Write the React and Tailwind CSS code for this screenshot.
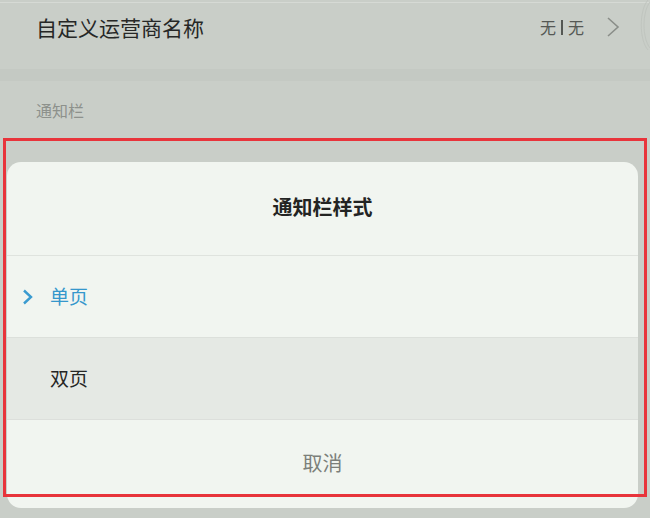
import React from "react";

const font = { fontFamily: '"Noto Sans CJK SC", "Noto Sans", sans-serif' };

export default function App() {
  return (
    <div
      className="relative w-[650px] h-[518px] overflow-hidden bg-[#c9cec8] flex flex-col"
      style={font}
    >
      <div className="h-[2px] bg-[#c9cec8]" />
      <div className="h-[1px] bg-[#d6dad5]" />
      {/* Top row */}
      <div className="h-[66px] flex items-start pt-[8px] pl-[36px] pr-[30px]">
        <div className="text-[21px] leading-[32px] text-[#262726]">自定义运营商名称</div>
        <div className="ml-auto flex items-center h-[32px]">
          <span className="text-[16px] leading-[20px] text-[#555854]">无</span>
          <span className="w-[2px] h-[15px] bg-[#555854] mx-[5px]" />
          <span className="text-[16px] leading-[20px] text-[#555854]">无</span>
          <svg className="ml-[22px]" width="14" height="22" viewBox="0 0 14 22">
            <path d="M2 2 L12 11 L2 20" fill="none" stroke="#8a8e89" strokeWidth="1.6" />
          </svg>
        </div>
      </div>
      {/* band */}
      <div className="h-[12px] bg-[#c4c9c3]" />
      {/* Section header */}
      <div className="h-[57px] pl-[36px] flex items-center">
        <span className="text-[16px] leading-[20px] text-[#8d918c]">通知栏</span>
      </div>
      {/* spacer before card */}
      <div className="h-[24px]" />
      {/* Dialog card */}
      <div className="ml-[7px] w-[631px] h-[346px] rounded-[14px] bg-[#f1f5f0] flex flex-col overflow-hidden">
        <div className="h-[94px] flex items-center justify-center border-b border-[#dfe3de]">
          <span className="text-[20px] font-bold text-[#232423] pb-[4px]">通知栏样式</span>
        </div>
        <div className="h-[82px] flex items-center border-b border-[#dce0db]">
          <svg className="ml-[15px]" width="12" height="16" viewBox="0 0 12 16">
            <path d="M2 1.5 L9 8 L2 14.5" fill="none" stroke="#3a9bd0" strokeWidth="2.4" />
          </svg>
          <span className="ml-[16px] text-[19px] text-[#3597cc]">单页</span>
        </div>
        <div className="h-[82px] flex items-center bg-[#e5e9e4] border-b border-[#dcdfdb]">
          <span className="ml-[43px] text-[19px] text-[#252625]">双页</span>
        </div>
        <div className="flex-1 flex items-center justify-center">
          <span className="text-[20px] text-[#7b7f7a] pb-[2px]">取消</span>
        </div>
      </div>
      {/* red highlight overlay */}
      <div className="absolute left-[3px] top-[138px] w-[644px] h-[359px] border-[3px] border-[#e8343b]" />
      {/* right edge curve artifact */}
      <svg className="absolute right-0 top-0" width="16" height="60" viewBox="0 0 16 60">
        <path d="M14 0 C5 10 5 40 14 50" fill="none" stroke="#c0c5bf" strokeWidth="1" />
        <path d="M16 2 C8 12 8 38 16 48" fill="none" stroke="#c0c5bf" strokeWidth="1" />
      </svg>
    </div>
  );
}
